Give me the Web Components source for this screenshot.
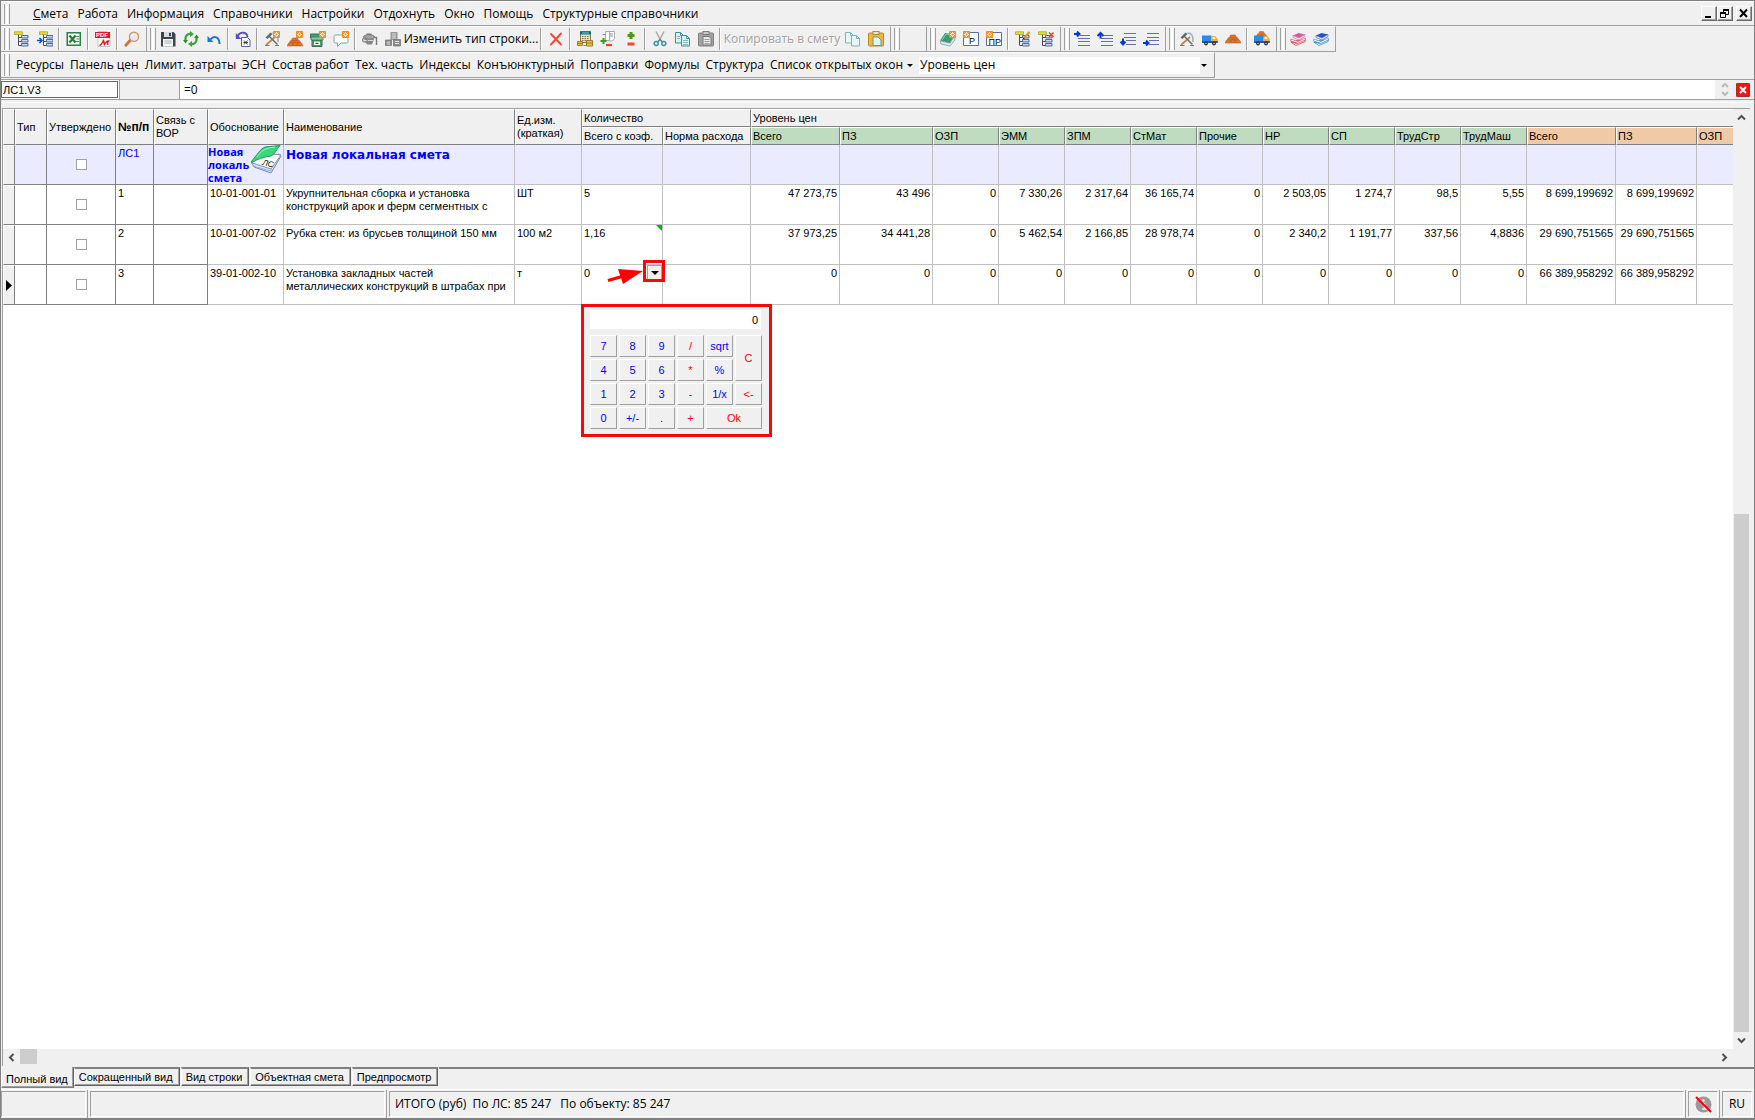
<!DOCTYPE html>
<html lang="ru">
<head>
<meta charset="utf-8">
<title>Смета</title>
<style>
  html, body { margin: 0; height: 100%; background: #f0f0f0; }
  body {
    --ui: "Open Sans", "Noto Sans", sans-serif;
    --grid: "Liberation Sans", Arial, sans-serif;
    --face: #f0f0f0; --line: #a0a0a0; --dark: #808080; --soft: #c0c0c0;
    font: 12px/16px var(--ui); color: #000;
  }
</style>
</head>
<body>
<estimate-app></estimate-app>
<script>
const star = (x, y) => `<rect x="${x}" y="${y}" width="7" height="7" rx="1" fill="#f28a1c"/><path d="M${x+3.5} ${y+1}v5M${x+1} ${y+3.5}h5M${x+1.7} ${y+1.7}l3.6 3.6M${x+5.3} ${y+1.7}l-3.6 3.6" stroke="#fff" stroke-width=".9"/><circle cx="${x+3.5}" cy="${y+3.5}" r="1" fill="#f28a1c"/>`;
const tree = (x) => `<g transform="translate(${x} 0)"><path d="M3.500 3v11.500M3.500 6.500h3M3.500 10.500h3M3.500 14.500h3" stroke="#4b4b5c" fill="none"/><path d="M-.5 .8h8v2.700h-8z" fill="#e6e03a" stroke="#9a9a20" stroke-width=".7"/><path d="M6.500 4.500h6.500v2.500H6.500zM6.500 8.500h6.500v2.500H6.500zM6.500 12.500h6.500v2.500H6.500z" fill="#c5d6ef" stroke="#4a5c88" stroke-width=".9"/></g>`;
const truck = `<path d="M0 4.500h9.500v5.500H0z" fill="#2b8be0"/><path d="M9.500 5h3.500l2.800 3v3.500H9.500z" fill="#f7a83c"/><path d="M10.500 6h2l1.300 2h-3.300z" fill="#d8f0ff"/><path d="M0 10h15.800v2H0z" fill="#1d5ca8"/><circle cx="4" cy="12.500" r="1.900" fill="#333"/><circle cx="12" cy="12.500" r="1.900" fill="#333"/><circle cx="4" cy="12.500" r=".7" fill="#ddd"/><circle cx="12" cy="12.500" r=".7" fill="#ddd"/>`;
const bricks = (y) => `<g transform="translate(0 ${y})" fill="#e87424" stroke="#b04a10" stroke-width=".5"><path d="M5.500 1h5l1 2.500h-7z"/><path d="M3.300 3.700h4.500v2.300H2.300zM8.200 3.700h4.500l1 2.300H8.200z"/><path d="M1.300 6.200h4.200V9H.2zM5.800 6.200h4.400V9H5.800zM10.500 6.200h4.200l1.100 2.800h-5.300z"/></g>`;
const hammers = `<path d="M2 14L11 6" stroke="#b98a4c" stroke-width="1.800"/><path d="M5 5l8.500 8.500" stroke="#6d6d6d" stroke-width="1.500"/><path d="M1.500 6.500L6.500 1.500l2 1.500-5 5z" fill="#5d6a70"/><path d="M8.500 2c4 0 6 2.500 5.500 9" fill="none" stroke="#9ab0b4" stroke-width="1.500"/><path d="M1 14.500h4.500M11 14.500h4" stroke="#8a7a60"/>`;
const books = (a, b) => `<path d="M.8 11l5 3.500 9.400-4V8.500L6 12z" fill="#fff" stroke="${b}" stroke-width=".8"/><path d="M.8 10.800L8 8.500l7.500 .6L6.500 13z" fill="${b}" opacity=".7"/><path d="M.8 8l7 2.500 7.500-3.500v2L8 12.300 .8 10z" fill="#fff" stroke="${b}" stroke-width=".6"/><path d="M3 4.500L8.500 2l6.500 1.500-6 3.500z" fill="${a}"/><path d="M3 4.500L9 7l6-3.500v2L9 9 3 6.500z" fill="#eee" stroke="${a}" stroke-width=".6"/>`;
const lines = (ys) => ys.map(y => `<path d="M${y[1]} ${y[0]}.5H16" stroke="#6470a0"/>`).join('');
const arr = (d) => `<path d="${d}" fill="none" stroke="#0a36d8" stroke-width="2"/>`;
const page = (x, y, s = '#3f8f96', f = '#d9f3f3') => `<path d="M${x+.5} ${y+.5}h5l3 3v7.500h-8z" fill="${f}" stroke="${s}"/><path d="M${x+5.5} ${y+.5}v3h3" fill="none" stroke="${s}"/>`;
const ICONS = {
  tree: tree(1),
  treeIn: tree(3) + `<path d="M0 9.500h5M2.500 7L5 9.500 2.500 12" fill="none" stroke="#0a50d8" stroke-width="1.600"/>`,
  excel: `<rect x=".5" y="1" width="14.500" height="14" fill="#2f7d48"/><rect x="2" y="2.500" width="11.500" height="11" fill="#edf6ee"/><path d="M3.500 4.500l6 7M9.500 4.500l-6 7" stroke="#2a7a3c" stroke-width="2.200"/><path d="M10 5.500h3M10.500 8h2.500M10 10.500h3" stroke="#2a7a3c" stroke-width=".8"/>`,
  pdf: `<path d="M3 .5h9l3 3v12H3z" fill="#fff" stroke="#c9c9c9"/><rect y="1" width="15" height="6" fill="#e3161c"/><text x="1" y="6" font-family="Liberation Sans" font-weight="700" font-size="6" fill="#fff">PDF</text><path d="M4.500 14.500c2-1 4-4 4-6 0 2 1 4 1 6 0-2 2-5 4-4.500-1 1-1 3-.5 4" fill="none" stroke="#e3161c" stroke-width="1.400"/>`,
  lens: `<path d="M1.800 14.200L6.500 9" stroke="#c9763a" stroke-width="2.800" stroke-linecap="round"/><circle cx="10" cy="5.800" r="4.600" fill="#dcecf8" stroke="#e0905c" stroke-width="1.400"/><path d="M7.500 5c.5-1.500 2-2 3-1.800" stroke="#fff" fill="none"/>`,
  save: `<path d="M1 1h12.500L15.500 3v12.500H1z" fill="#3c4450"/><rect x="4" y="1" width="8" height="5" fill="#d9dde2"/><rect x="9" y="1.800" width="2" height="3.400" fill="#3c4450"/><rect x="3" y="8" width="10" height="7.500" fill="#f2f4f6"/><path d="M4.500 10h7M4.500 12h7" stroke="#a9b0b8"/>`,
  refresh: `<path d="M2.500 9.500V7a4.500 4.500 0 0 1 5-4M13.500 6.500V9a4.500 4.500 0 0 1-5 4" fill="none" stroke="#3aa53a" stroke-width="2.300"/><path d="M7 0l4 3-4 3zM9 10l-4 3 4 3z" fill="#3aa53a"/><path d="M0 9h5l-2.500 3.500zM11 7h5l-2.500-3.500z" fill="#2c8c2c"/>`,
  undo: `<path d="M4.500 8.500C8 4 13.500 6 13.500 13" fill="none" stroke="#1f6fe0" stroke-width="2"/><path d="M1.500 5v6h6z" fill="#1f6fe0"/>`,
  undoDoc: `<path d="M6.500 6.500h6l2.500 2.500v6.500H6.500z" fill="#fff" stroke="#4a6aa0"/><path d="M9 9.500l3.500 4M12.500 9.500l-3.500 4M8.500 11.500h4.500" stroke="#3a3a50"/><path d="M2.500 5C5.500 0 12 1 12.500 6" fill="none" stroke="#5a48d8" stroke-width="1.800"/><path d="M.8 2v6h5.500z" fill="#5a48d8"/>`,
  work: hammers + star(9, 0),
  brick: bricks(6) + star(9, 0),
  machine: `<path d="M.5 3h9v4h-9zM2 9h10v6.500H2z" fill="#4b9a72" stroke="#2d7450"/><path d="M1 6h12v3H1z" fill="#8cc5a4" stroke="#2d7450" stroke-width=".7"/><path d="M4 10.500h6V14H4z" fill="#f4f4e6"/><path d="M5.500 12.300h3" stroke="#333"/>` + star(9, 0),
  note: `<path d="M2.500 4h11a1.500 1.500 0 0 1 1.500 1.500v5a1.500 1.500 0 0 1-1.500 1.500H8l-3.500 3.500V12H2.500A1.500 1.500 0 0 1 1 10.500v-5A1.500 1.500 0 0 1 2.500 4z" fill="#fff" stroke="#7ba6ac"/>` + star(9, 0),
  mixer: `<path d="M4.500 2.500h5v2h-5z" fill="#777"/><ellipse cx="7" cy="6" rx="5.500" ry="2.200" fill="#a6a6a6" stroke="#777"/><path d="M2 8h10l-2 5.500H5z" fill="#858585"/><path d="M3 9.500h8" stroke="#d6d6d6"/><ellipse cx="3" cy="9" rx="2.500" ry="2.200" fill="none" stroke="#8a8a8a" stroke-width="1.300"/><path d="M12 6.500h2.500V14" fill="none" stroke="#777" stroke-width="1.400"/>`,
  blocks: `<path d="M5.500 1h7v8h-7z" fill="#989898"/><path d="M7 3h4M7 5h4M7 7h4" stroke="#dedede"/><path d="M.5 9h6v5.500h-6zM8.500 8.500h7V15h-7z" fill="#8e8e8e" stroke="#6f6f6f" stroke-width=".7"/><path d="M2 11h3M2 13h3M10 10.500h4M10 12.500h4" stroke="#ddd"/>`,
  del: `<path d="M3 3l10 10.500M13 2.500L3 13.500" stroke="#f04a30" stroke-width="1.900" stroke-linecap="round"/>`,
  calcCoins: `<path d="M3.500 .5h10v11h-10z" fill="#e8dcc0" stroke="#8a7a58"/><path d="M3 .5h11v3H3z" fill="#17656c"/><path d="M5 2h7" stroke="#4fe0d8"/><path d="M5 5.500h7M5 7.500h7M5 9.500h7" stroke="#8a7a58" stroke-dasharray="1.500 1"/><path d="M.5 10.500h5v4h-5zM9.500 9.500h6v5.500h-6z" fill="#eac045" stroke="#8a6a10" stroke-width=".8"/><path d="M.5 12.500h5M9.500 12h6M6.500 14.500h3" stroke="#8a6a10" stroke-width=".8"/>`,
  pagePm: `<path d="M5.500 .5h4v9h-4zM8.500 .5h6v7l-2 2.500h-4" fill="#fff" stroke="#a8a8b8"/><path d="M2.500 3.500h3M10 3h3M10 5h3" stroke="#8a8ac0"/><path d="M3.500 7v6M.5 10h6" stroke="#3c9a1c" stroke-width="2"/><path d="M6 14h6" stroke="#f04020" stroke-width="2.200"/>`,
  plusMinus: `<path d="M8 1v7M4.500 4.500h7" stroke="#4a9a18" stroke-width="3"/><path d="M4.500 13h7" stroke="#f04a28" stroke-width="3"/>`,
  cut: `<path d="M4 .5l5 9.500M12 .5L7 10" stroke="#a8a8a8" stroke-width="1.500"/><circle cx="4.200" cy="12.500" r="2" fill="none" stroke="#3c9098" stroke-width="1.500"/><circle cx="11.800" cy="12.500" r="2" fill="none" stroke="#3c9098" stroke-width="1.500"/><path d="M5.500 11L8 8.500l2.500 2.500" fill="none" stroke="#3c9098" stroke-width="1.300"/>`,
  copy: page(0, 1) + page(6, 4) + `<path d="M2 5.500h3M2 7.500h3M8 9.500h5M8 11.500h5M8 13.500h5" stroke="#6aaeb4" stroke-width=".8"/>`,
  pasteOff: `<rect x=".5" y="2" width="15" height="13" rx="1" fill="#a2a2a2" stroke="#808080"/><rect x="5" y=".5" width="6" height="3" fill="#c8c8c8" stroke="#808080"/><path d="M5 5.500h6l2 2V14H5z" fill="#ececec" stroke="#777"/><path d="M6.500 8.500h5M6.500 10.500h5M6.500 12.500h5" stroke="#888" stroke-width=".8"/>`,
  copy2: page(0, 1, '#7fb5ba', '#e4f6f6') + page(6, 4, '#7fb5ba', '#e4f6f6'),
  paste: `<rect x=".5" y="2" width="15" height="13" rx="1" fill="#f4b63a" stroke="#c8861a"/><rect x="5" y=".5" width="6" height="3" fill="#f0e4c0" stroke="#b08a40"/><path d="M5 6h5l3 3v5.500H5z" fill="#e2f5f5" stroke="#5a9aa0"/>`,
  bookNew: `<path d="M0 10l10 2 5-7v4l-5 6L1 13z" fill="#dfe8ef" stroke="#7b8fa0" stroke-width=".7"/><path d="M0 9.500L5 2l10 1.500L10 12z" fill="#3c9c70"/><path d="M2 9l4-6 3 .4" fill="none" stroke="#8fd0b0"/>` + star(9, 0),
  docP: `<path d="M.5 1.500h15v13H.5z" fill="#fff" stroke="#5870a0"/><text x="6" y="13" font-family="Liberation Sans" font-size="9" fill="#000">Р</text>` + star(0, 0),
  docPR: `<path d="M.5 1.500h15v13H.5z" fill="#fff" stroke="#5870a0"/><text x="2.500" y="13.500" font-family="Liberation Sans" font-size="9" fill="#000">ПР</text>` + star(0, 0),
  treeEdit: tree(1) + `<path d="M9 7L14.500 1" stroke="#e0962c" stroke-width="2.300"/><path d="M7.500 8.500l1.300-2 1 1z" fill="#222"/>`,
  treeDel: tree(1) + `<path d="M11 1.500l4.500 4.500M15.500 1.500L11 6" stroke="#f03a28" stroke-width="1.400"/>`,
  ind1: lines([[4, 6], [7, 4], [10, 4], [14, 4]]) + arr('M0 3h5M3 .500l2.500 2.500L3 5.500'),
  ind2: lines([[4, 7], [7, 4], [10, 4], [14, 4]]) + arr('M.5 5l3-3 3 3M3.500 2.500v5'),
  ind3: lines([[2, 4], [6, 4], [9, 6], [13, 6]]) + arr('M.5 10.500l2.500 3 2.500-3M3 13V7.500'),
  ind4: lines([[2, 4], [6, 4], [9, 6], [13, 6]]) + arr('M0 12h5M3 9.500L5.500 12 3 14.500'),
  hammers, truck, bricks: bricks(3), truckBrick: `<g transform="translate(1 -1) scale(.8)">${bricks(1)}</g>` + truck,
  booksRed: books('#e0589c', '#d83848'), booksBlue: books('#2450c8', '#2c88c8'),
  blank: ''
};

class BaseEl extends HTMLElement {
  paint(css, html) {
    const t = document.createElement('template');
    t.innerHTML = `<style>*{box-sizing:border-box}${css}</style>${html}`;
    this.attachShadow({ mode: 'open' }).append(t.content.cloneNode(true));
  }
}

customElements.define('tool-button', class extends BaseEl {
  connectedCallback() {
    const name = this.getAttribute('icon');
    this.paint(`
      :host{display:block;flex:none}
      button{display:flex;align-items:center;justify-content:center;width:100%;height:24px;min-width:23px;padding:0;border:0;background:none;font:inherit;color:inherit;white-space:nowrap}
      button:disabled{color:#a0a0a0;text-shadow:1px 1px #fff}
      svg{width:16px;height:16px;display:block}`,
      `<button type="button" ${this.hasAttribute('off') ? 'disabled' : ''} ${name ? `aria-label="${name}"` : ''}>${name ? `<svg viewBox="0 0 16 16">${ICONS[name]}</svg>` : ''}<slot></slot></button>`);
  }
});

customElements.define('tool-band', class extends BaseEl {
  connectedCallback() {
    this.paint(`
      :host{display:flex;align-items:center;height:26px;padding-right:3px;border-right:1px solid var(--line);border-bottom:1px solid var(--line);border-top:1px solid #fff}
      i{flex:none;width:6px;height:22px;margin:0 0 0 3px;border:solid;border-width:0 1px;border-color:var(--line);padding:0 1px}
      i::before{content:"";display:block;height:100%;border:solid #fff;border-width:0 1px}
      ::slotted(hr){flex:none;width:2px;height:22px;margin:0 2px;border:0;border-left:1px solid var(--line);border-right:1px solid #fff}`,
      `<i></i><slot></slot>`);
  }
});

customElements.define('menu-band', class extends BaseEl {
  connectedCallback() {
    const items = ['<u>С</u>мета', 'Работа', 'Информация', 'Справочники', 'Настройки', 'Отдохнуть', 'Окно', 'Помощь', 'Структурные справочники'];
    this.paint(`
      :host{display:block}
      .bar{display:flex;align-items:center;height:25px;border-top:1px solid #fff;border-bottom:1px solid var(--line);padding-right:2px}
      .grip{flex:none;width:6px;height:20px;margin:0 23px 0 3px;border:solid;border-width:0 1px;border-color:var(--line);padding:0 1px}
      .grip::before{content:"";display:block;height:100%;border:solid #fff;border-width:0 1px}
      nav{display:flex;flex:1;gap:9px}
      nav a{color:#000;text-decoration:none;white-space:nowrap}
      .win{display:flex}
      .win button{width:16px;height:15px;padding:0;border:1px solid;border-color:#fff #696969 #696969 #fff;box-shadow:inset -1px -1px var(--line);background:var(--face)}
      .win button:last-child{margin-left:3px}
      svg{display:block;width:12px;height:11px;margin:auto}`,
      `<div class="bar"><span class="grip"></span><nav>${items.map(t => `<a href="#">${t}</a>`).join('')}</nav>
      <div class="win">
        <button type="button" aria-label="Свернуть"><svg viewBox="0 0 12 11"><path d="M2 9h6" stroke="#000" stroke-width="2"/></svg></button>
        <button type="button" aria-label="Восстановить"><svg viewBox="0 0 12 11"><path d="M4 1h6v2H4zM1 4h6v2H1z"/><path d="M4.500 2v2M9.500 2v4.500H7M1.500 5v4.500h5V5" fill="none" stroke="#000"/></svg></button>
        <button type="button" aria-label="Закрыть"><svg viewBox="0 0 12 11"><path d="M2 1.500l7 7.500M9 1.500L2 9" stroke="#000" stroke-width="2"/></svg></button>
      </div></div>`);
  }
});

customElements.define('tool-rows', class extends BaseEl {
  connectedCallback() {
    const b = s => s.split(' ').map(n => n === '|' ? '<hr>' : `<tool-button icon="${n}"></tool-button>`).join('');
    const links = ['Ресурсы', 'Панель цен', 'Лимит. затраты', 'ЭСН', 'Состав работ', 'Тех. часть', 'Индексы', 'Конъюнктурный', 'Поправки', 'Формулы', 'Структура'];
    this.paint(`
      :host{display:block}
      .row{display:flex}
      .t1{width:134px}.t2{width:118px}
      .named{gap:6px}
      .list{display:flex;align-items:center;gap:4px}
      .list::after{content:"";border:3px solid transparent;border-top-color:#000;border-bottom:0}
      .combo{display:grid;grid-template-columns:1fr 9px;width:290px;height:17px;margin:0 2px 0 0;background:#fff}
      select{grid-area:1/1/2/3;appearance:none;border:0;background:none;padding:0 12px 0 1px;margin:0;font:inherit;line-height:16px;color:#000;outline:0}
      .arrow{grid-area:1/2;pointer-events:none;background:var(--face);display:flex;align-items:center;justify-content:center}
      .arrow::before{content:"";border:3px solid transparent;border-top-color:#000;border-bottom:0}`,
      `<div class="row">
        <tool-band>${b('tree treeIn | excel | pdf | lens')}</tool-band>
        <tool-band>${b('save refresh undo | undoDoc | work brick machine note | mixer blocks')}<tool-button class="t1">Изменить тип строки...</tool-button>${b('| del | calcCoins pagePm plusMinus | cut copy pasteOff |')}<tool-button class="t2" off>Копировать в смету</tool-button>${b('copy2 paste')}</tool-band>
        <tool-band>${b('blank')}</tool-band>
        <tool-band>${b('bookNew docP docPR | treeEdit treeDel')}</tool-band>
        <tool-band>${b('ind1 ind2 ind3 ind4')}</tool-band>
        <tool-band>${b('hammers truck bricks | truckBrick')}</tool-band>
        <tool-band>${b('booksRed booksBlue')}</tool-band>
      </div>
      <div class="row"><tool-band class="named">${links.map(t => `<tool-button>${t}</tool-button>`).join('')}<tool-button><span class="list">Список открытых окон</span></tool-button>
        <label class="combo"><select aria-label="Уровень цен"><option>Уровень цен</option></select><span class="arrow"></span></label></tool-band></div>`);
  }
});

customElements.define('formula-bar', class extends BaseEl {
  connectedCallback() {
    this.paint(`
      :host{display:flex;align-items:stretch;height:21px;margin-top:1px;border-top:1px solid var(--line);border-bottom:1px solid var(--line);background:#fff}
      input{border:0;outline:0;margin:0;color:#000}
      .name{width:117px;margin:1px 0;padding:0 1px;border:1px solid #696969;background:#fcfcfc;font:11px var(--grid)}
      .gap{width:61px;margin-left:1px;border:solid var(--line);border-width:0 1px;background:var(--face)}
      .expr{flex:1;min-width:0;padding:0 4px;font:12px var(--ui);color:#000}
      .spin{width:20px;background:var(--face);display:flex;flex-direction:column;align-items:center;justify-content:space-evenly}
      .side{width:19px;padding-left:1px;background:var(--face);display:flex;align-items:center}
      button{width:14px;height:14px;padding:0;border:1px solid #a03020;border-radius:1px;background:#f41414;display:flex;align-items:center;justify-content:center}
      svg{display:block}`,
      `<input class="name" value="ЛС1.V3" aria-label="Ячейка"><span class="gap"></span><input class="expr" value="=0" aria-label="Формула">
      <span class="spin"><svg width="8" height="6"><path d="M1 5l3-3 3 3" fill="none" stroke="#bcbcbc" stroke-width="2"/></svg><svg width="8" height="6"><path d="M1 1l3 3 3-3" fill="none" stroke="#bcbcbc" stroke-width="2"/></svg></span>
      <span class="side"><button type="button" aria-label="Закрыть строку"><svg width="8" height="8"><path d="M1 1l6 6M7 1L1 7" stroke="#fff" stroke-width="2"/></svg></button></span>`);
  }
});

customElements.define('calc-pad', class extends BaseEl {
  connectedCallback() {
    const keys = ['7', '8', '9', '/r', 'sqrt', 'Cr', '4', '5', '6', '*r', '%', '1', '2', '3', '-r', '1/x', '<-r', '0', '+/-', '.', '+r', 'Okr'];
    this.paint(`
      :host{box-sizing:border-box;display:block;width:191px;border:3px solid #f80808;background:var(--face);padding:3px 7px 5px 6px;font:11px/13px var(--grid)}
      .in{display:block;width:171px;height:19px;margin-bottom:6px;padding:0 3px;border:0;background:#fff;text-align:right;font:11px var(--grid);color:#000}
      .keys{display:grid;grid-template-columns:repeat(6,27px);grid-auto-rows:22px;gap:2px}
      button{padding:0;border:1px solid;border-color:#fff var(--line) var(--line) #fff;background:var(--face);font:inherit;color:#00f}
      .r{color:#f00}.c{grid-row:span 2}.ok{grid-column:span 2}`,
      `<input class="in" value="0" aria-label="Значение"><div class="keys">${keys.map(k => {
        const red = k.length > 1 && k.endsWith('r'), t = red ? k.slice(0, -1) : k;
        return `<button type="button" class="${red ? 'r' : ''} ${t === 'C' ? 'c' : ''} ${t === 'Ok' ? 'ok' : ''}">${t.replace('<', '&lt;')}</button>`;
      }).join('')}</div>`);
  }
});

customElements.define('estimate-grid', class extends BaseEl {
  connectedCallback() {
    const widths = [12, 32, 69, 38, 54, 76, 231, 67, 81, 88, 89, 93, 66, 66, 66, 66, 66, 66, 66, 66, 66, 89, 81];
    const green = ['Всего', 'ПЗ', 'ОЗП', 'ЭММ', 'ЗПМ', 'СтМат', 'Прочие', 'НР', 'СП', 'ТрудСтр', 'ТрудМаш'];
    const data = [
      ['1', '10-01-001-01', 'Укрупнительная сборка и установка<br>конструкций арок и ферм сегментных с', 'ШТ', '5', '47 273,75', '43 496', '0', '7 330,26', '2 317,64', '36 165,74', '0', '2 503,05', '1 274,7', '98,5', '5,55', '8 699,199692', '8 699,199692'],
      ['2', '10-01-007-02', 'Рубка стен: из брусьев толщиной 150 мм', '100 м2', '1,16', '37 973,25', '34 441,28', '0', '5 462,54', '2 166,85', '28 978,74', '0', '2 340,2', '1 191,77', '337,56', '4,8836', '29 690,751565', '29 690,751565'],
      ['3', '39-01-002-10', 'Установка закладных частей<br>металлических конструкций в штрабах при', 'т', '0', ...Array(11).fill('0'), '66 389,958292', '66 389,958292']
    ];
    const check = n => `<td class="f ck"><input type="checkbox" aria-label="Утверждено ${n}"></td>`;
    const marker = '<svg class="cur" width="6" height="11"><path d="M0 0l6 5.500L0 11z"/></svg>';
    const extra = [
      '',
      '<span class="flag"></span>',
      `<button type="button" class="drop" aria-label="Калькулятор"></button><span class="frame"></span>
       <svg class="arrow" width="38" height="18"><path d="M2 12.500L16 8.500" stroke="#f00" stroke-width="3"/><path d="M12 1l25 2L17 16z" fill="#f00"/></svg><calc-pad></calc-pad>`
    ];
    const body = data.map((r, i) => `<tr><td class="ind">${i === 2 ? marker : ''}</td><td class="f"></td>${check(r[0])}<td class="f">${r[0]}</td><td class="f"></td>
      <td>${r[1]}</td><td>${r[2]}</td><td>${r[3]}</td><td class="q">${r[4]}${extra[i]}</td><td></td>${r.slice(5).map(v => `<td class="num">${v}</td>`).join('')}<td></td></tr>`).join('');
    this.paint(`
      :host{display:grid;grid-template:1fr 17px/1fr 17px;flex:1;min-height:0;margin:5px 4px 1px 1px;border-top:1px solid var(--line);border-left:1px solid var(--line);font:11px/13px var(--grid)}
      .view{background:#fff;min-width:0;overflow:hidden}
      table{table-layout:fixed;width:100%;border-collapse:separate;border-spacing:0}
      th{height:18px;padding:0 1px;text-align:left;font-weight:400;white-space:nowrap;vertical-align:middle;background:var(--face);border:1px solid;border-color:#fff var(--dark) var(--dark) #fff;overflow:hidden;line-height:13px}
      th.b{font-weight:700;font-size:12px}
      th.g{background:#c0dcc0}th.o{background:#f0caa6}
      th.end,td:last-child{border-right:0}
      td{height:40px;padding:2px 3px 0 2px;vertical-align:top;border:solid var(--soft);border-width:0 1px 1px 0;white-space:nowrap}
      td.f{border-color:var(--dark)}
      td.num{text-align:right;padding-right:2px}
      td.ind{background:var(--face);border:1px solid;border-color:#fff var(--dark) var(--dark) #fff;padding:0;vertical-align:middle}
      td.ck{padding:0;text-align:center;vertical-align:middle}
      input{appearance:none;display:block;width:11px;height:11px;margin:0 auto;border:1px solid var(--line);background:#fff}
      .cur{display:block;margin-left:2px}
      tr.top td:not(.ind){background:#ebebff;color:#00f}
      tr.top td.code{padding:0;position:relative;font:700 11px/13px "Open Sans",sans-serif}
      tr.top td.code svg{position:absolute;right:1px;top:0}
      tr.top td.title{font:700 12px/16px "DejaVu Sans",sans-serif}
      .q{position:relative}
      .flag{position:absolute;right:0;top:0;border:solid transparent;border-width:6px 0 0 6px;border-top-color:#00b400}
      .drop{position:absolute;right:0;top:0;width:15px;height:16px;padding:0;border:1px solid var(--line);background:var(--face);display:flex;align-items:center;justify-content:center}
      .drop::before{content:"";border:4px solid transparent;border-top-color:#000;border-bottom:0}
      .frame{position:absolute;right:-3px;top:-5px;width:22px;height:22px;border:3px solid #f80808;pointer-events:none}
      .arrow{position:absolute;right:18px;top:3px}
      calc-pad{position:absolute;left:-1px;top:39px;z-index:2}
      .v,.h{display:flex;background:var(--face)}
      .v{flex-direction:column}
      .v button,.h button{flex:none;width:17px;height:17px;padding:0;border:0;background:none;display:flex;align-items:center;justify-content:center}
      .v .sp{flex:388}.v .th{flex:517;width:15px;margin-left:1px;background:#cdcdcd}
      .h{grid-column:1/3;padding-right:17px}.h .th{width:17px;height:15px;background:#cdcdcd}.h .sp{flex:1}`,
      `<div class="view"><table><colgroup>${widths.map(w => `<col style="width:${w}px">`).join('')}<col></colgroup>
      <thead><tr><th rowspan="2"></th><th rowspan="2">Тип</th><th rowspan="2">Утверждено</th><th rowspan="2" class="b">№п/п</th><th rowspan="2">Связь с<br>ВОР</th><th rowspan="2">Обоснование</th><th rowspan="2">Наименование</th><th rowspan="2">Ед.изм.<br>(краткая)</th><th colspan="2">Количество</th><th colspan="14" class="end">Уровень цен</th></tr>
      <tr><th>Всего с коэф.</th><th>Норма расхода</th>${green.map(t => `<th class="g">${t}</th>`).join('')}<th class="o">Всего</th><th class="o">ПЗ</th><th class="o end">ОЗП</th></tr></thead>
      <tbody><tr class="top"><td class="ind"></td><td class="f"></td>${check('ЛС1')}<td class="f">ЛС1</td><td class="f"></td>
      <td class="code">Новая<br>локаль<br>смета<svg width="31" height="29" viewBox="0 0 31 29"><path d="M1 18l2 4 17 6 10-17-2-2z" fill="#dfe6fa" stroke="#6f86b4"/><path d="M1 18L12 8l18 2-10 14z" fill="#fdfdfd" stroke="#7f90b0"/><path d="M2 21l18 5M20 24v4" stroke="#8fb0e0" fill="none"/><path d="M0 17C6 10 9 4 14 2l15-1.500C25 5 24 9 20 11 13 12 6 14 0 18z" fill="#3ad67c" stroke="#1f9c56"/><path d="M6 12C10 6 14 3 24 2" stroke="#a8f0c4" fill="none"/><text x="11" y="20" transform="rotate(12 11 20)" font-family="Liberation Sans" font-style="italic" font-weight="400" font-size="8" fill="#000">ЛС</text></svg></td>
      <td class="title">Новая локальная смета</td>${'<td></td>'.repeat(17)}</tr>${body}</tbody></table></div>
      <div class="v"><button type="button" aria-label="Вверх"><svg width="9" height="7"><path d="M1 5.500L4.500 2 8 5.500" fill="none" stroke="#505050" stroke-width="2"/></svg></button><span class="sp"></span><span class="th"></span><button type="button" aria-label="Вниз"><svg width="9" height="7"><path d="M1 1.500L4.500 5 8 1.500" fill="none" stroke="#505050" stroke-width="2"/></svg></button></div>
      <div class="h"><button type="button" aria-label="Влево"><svg width="7" height="9"><path d="M5.500 1L2 4.500 5.500 8" fill="none" stroke="#505050" stroke-width="2"/></svg></button><span class="th"></span><span class="sp"></span><button type="button" aria-label="Вправо"><svg width="7" height="9"><path d="M1.500 1L5 4.500 1.500 8" fill="none" stroke="#505050" stroke-width="2"/></svg></button></div>`);
  }
});

customElements.define('view-tabs', class extends BaseEl {
  connectedCallback() {
    this.paint(`
      :host{display:flex;align-items:flex-start;height:22px;font:11px/14px var(--grid)}
      button{flex:none;height:19px;margin:0 1px 0 0;padding:0 6px 0 4px;border:1px solid;border-color:var(--dark) #606060 #606060 #fff;border-top:2px solid var(--dark);background:var(--face);font:inherit;color:#000;box-shadow:inset -1px -1px var(--line)}
      button.on{height:21px;margin:0;padding:3px 5px 0 4px;border-top:0;border-bottom-color:var(--dark)}
      span{flex:1;border-top:2px solid var(--dark)}`,
      `<button type="button" class="on">Полный вид</button><button type="button">Сокращенный вид</button><button type="button">Вид строки</button><button type="button">Объектная смета</button><button type="button">Предпросмотр</button><span></span>`);
  }
});

customElements.define('status-bar', class extends BaseEl {
  connectedCallback() {
    this.paint(`
      :host{display:flex;height:31px;padding-right:2px;border-top:1px solid #fff;border-bottom:2px solid var(--dark);gap:1px}
      div{display:flex;align-items:center;margin:1px 0;padding:0 5px;border:1px solid;border-color:var(--line) #fff #fff var(--line);white-space:pre}
      i{width:1px;background:var(--line);margin:0 1px 0 0}
      .a{width:85px}.b{width:295px}.c{flex:1}.d,.e{width:30px;justify-content:center;padding:0}
      p{margin:0}.o{margin-left:9px}`,
      `<div class="a"></div><i></i><div class="b"></div><i></i><div class="c"><p>ИТОГО (руб)  По ЛС: 85 247</p><p class="o">По объекту: 85 247</p></div><i></i>
      <div class="d"><svg width="17" height="17"><circle cx="8.500" cy="8.500" r="8" fill="#9a9a9a"/><path d="M7 7.500h2.500V13M7 13h5" stroke="#f0f0f0" stroke-width="1.600" fill="none"/><circle cx="8.500" cy="4.500" r="1.200" fill="#f0f0f0"/><path d="M1 1l15 15" stroke="#f00" stroke-width="2"/></svg></div><i></i><div class="e">RU</div>`);
  }
});

customElements.define('estimate-app', class extends BaseEl {
  connectedCallback() {
    this.paint(`
      :host{box-sizing:border-box;display:flex;flex-direction:column;min-height:100vh;border:1px solid var(--dark);border-bottom:0;background:var(--face)}
      .gap{height:3px;background:var(--face);border-bottom:1px solid #fff}`,
      `<menu-band></menu-band><tool-rows></tool-rows><formula-bar></formula-bar><div class="gap"></div><estimate-grid></estimate-grid><view-tabs></view-tabs><status-bar></status-bar>`);
  }
});
</script>
</body>
</html>
